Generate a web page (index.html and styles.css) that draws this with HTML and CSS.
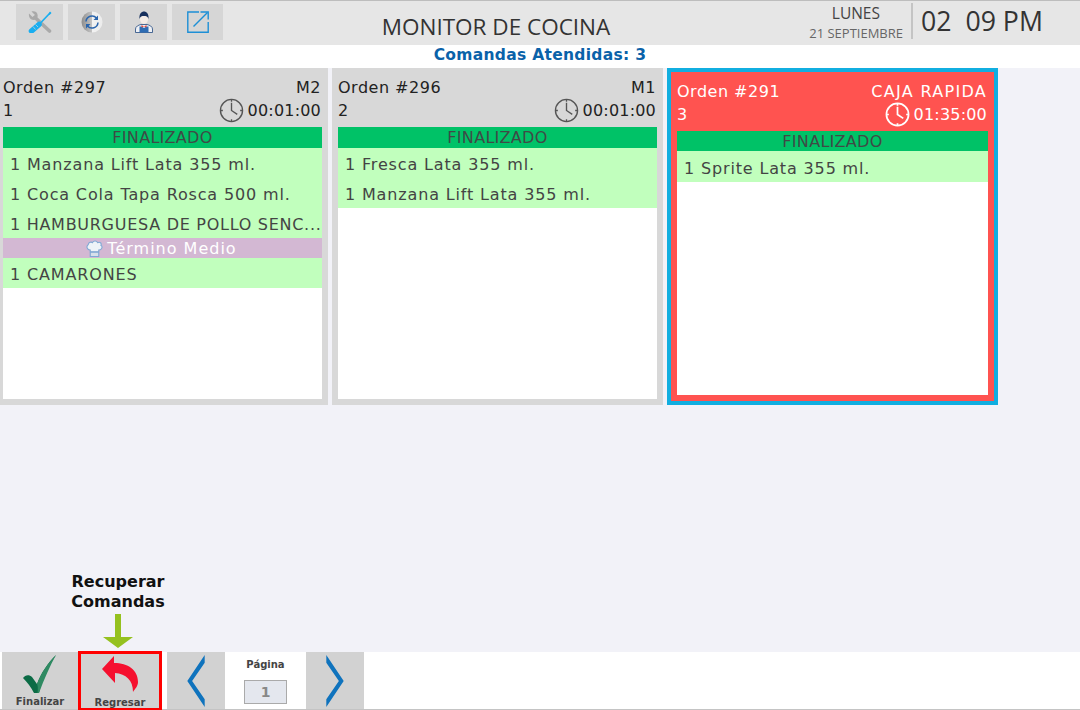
FILE: index.html
```html
<!DOCTYPE html>
<html lang="es">
<head>
<meta charset="utf-8">
<title>Monitor de Cocina</title>
<link rel="stylesheet" href="styles.css">
</head>
<body>
<div class="app">
  <header class="topbar">
    <div class="tools">
      <button class="tool"><svg width="24" height="22" viewBox="0 0 24 22" fill="none"><path d="M7 6.500 21.500 20" stroke="#a9a9a9" stroke-width="3.600" stroke-linecap="round"/><path d="M1 2.500 4.500 6 7 4 3.500 .5C7 -.5 10.500 1.500 9.500 6 8.500 8.500 6 9.500 3.500 8.500 1.500 7.500 .5 5 1 2.500Z" fill="#a9a9a9"/><path d="M22.500 1.500 12 12.500" stroke="#19aef0" stroke-width="1.700"/><path d="M22 .5 23.500 2 21.500 4 20.500 3Z" fill="#19aef0"/><path d="M11 13.500 3.500 20" stroke="#19aef0" stroke-width="5.500" stroke-linecap="round"/><path d="M5 15.500 7.500 18.500M7.500 13.500 10 16" stroke="#d6d6d6" stroke-width=".7"/></svg></button>
      <button class="tool"><svg width="22" height="22" viewBox="0 0 22 22"><defs><linearGradient id="refreshGrad" x1="0" x2="1" y1="0" y2="0"><stop offset="0" stop-color="#8e8e8e"/><stop offset=".5" stop-color="#c4c4c4"/><stop offset=".5" stop-color="#f2f2f2"/><stop offset="1" stop-color="#ececec"/></linearGradient></defs><circle cx="11" cy="11" r="10.500" fill="url(#refreshGrad)"/><path d="M5 10.500A6 6 0 0 1 15.500 7M17 11.500A6 6 0 0 1 6.500 15" fill="none" stroke="#2a65ad" stroke-width="1.500"/><path d="M17 4.500V9H12.500ZM5 17.500V13H9.500Z" fill="#2a65ad"/></svg></button>
      <button class="tool"><svg width="18" height="22" viewBox="0 0 18 22"><path d="M.5 21.500V18C.5 15.500 3.500 14 6 13.500H12C14.500 14 17.500 15.500 17.500 18V21.500Z" fill="#eef0f4" stroke="#22497f" stroke-width=".8"/><path d="M4.500 21.500V15.500H6.500L9 17 11.500 15.500H13.500V21.500Z" fill="#2e6cb3"/><path d="M6.500 14 9 15.500 11.500 14V16.500L9 15.500 6.500 16.500Z" fill="#e5483a"/><ellipse cx="9" cy="8" rx="4" ry="5" fill="#f4ece6"/><path d="M4.500 8C4 2.500 6.500 .5 9 .5S14 2.500 13.500 8C13 5.500 11 5 9 5S5 5.500 4.500 8Z" fill="#17305c"/></svg></button>
      <button class="tool tool-wide"><svg width="22" height="22" viewBox="0 0 22 22" fill="none" stroke="#1d8fd6" stroke-width="1.400"><path d="M12 1H.8V21.200H21.200V11"/><path d="M6.500 15.500 20.500 1.500"/><path d="M13.500 1H21.200V8.500"/></svg></button>
    </div>
    <h1 class="title">MONITOR DE COCINA</h1>
    <div class="date"><div class="day">LUNES</div><div class="fulldate">21 SEPTIEMBRE</div></div>
    <div class="clock">02&nbsp; 09 PM</div>
  </header>
  <div class="attended">Comandas Atendidas: 3</div>
  <main class="board">
    <section class="card">
      <div class="card-head">
        <div class="line"><span>Orden #297</span><span>M2</span></div>
        <div class="line"><span>1</span><span class="timer"><svg class="clock-ico" viewBox="0 0 26 26" fill="none" stroke="currentColor" stroke-width="1.400"><circle cx="13" cy="13" r="11.500"/><path d="M13 5V13L19 17M13 1.500V4M13 22V24.500M1.500 13H4M22 13H24.500" /></svg>00:01:00</span></div>
      </div>
      <div class="status">FINALIZADO</div>
      <div class="item">1 Manzana Lift Lata 355 ml.</div>
      <div class="item">1 Coca Cola Tapa Rosca 500 ml.</div>
      <div class="item item-caps">1 HAMBURGUESA DE POLLO SENC...</div>
      <div class="note"><svg class="chef" viewBox="0 0 16 16"><path d="M4 9.500C1 9.500 0 6 2 4.500 2.500 2 5 1.500 6 2.500 7 .5 10 .5 11 2.500 13 1.500 15 3 14 5 16 6 15 9.500 12 9.500V11H4Z" fill="#eef3f8" stroke="#7fa8d4" stroke-width="1"/><path d="M4 11.500H12V15.500H4Z" fill="#d7e0ea" stroke="#7fa8d4" stroke-width="1"/></svg>Término Medio</div>
      <div class="item">1 CAMARONES</div>
    </section>
    <section class="card">
      <div class="card-head">
        <div class="line"><span>Orden #296</span><span>M1</span></div>
        <div class="line"><span>2</span><span class="timer"><svg class="clock-ico" viewBox="0 0 26 26" fill="none" stroke="currentColor" stroke-width="1.400"><circle cx="13" cy="13" r="11.500"/><path d="M13 5V13L19 17M13 1.500V4M13 22V24.500M1.500 13H4M22 13H24.500" /></svg>00:01:00</span></div>
      </div>
      <div class="status">FINALIZADO</div>
      <div class="item">1 Fresca Lata 355 ml.</div>
      <div class="item">1 Manzana Lift Lata 355 ml.</div>
    </section>
    <section class="card card-alert">
      <div class="card-head">
        <div class="line"><span>Orden #291</span><span class="wide">CAJA RAPIDA</span></div>
        <div class="line"><span>3</span><span class="timer"><svg class="clock-ico" viewBox="0 0 26 26" fill="none" stroke="currentColor" stroke-width="1.800"><circle cx="13" cy="13" r="11.500"/><path d="M13 5V13L19 17M13 1.500V4M13 22V24.500M1.500 13H4M22 13H24.500" /></svg>01:35:00</span></div>
      </div>
      <div class="status">FINALIZADO</div>
      <div class="item">1 Sprite Lata 355 ml.</div>
    </section>
    <div class="callout">
      <div class="callout-text">Recuperar<br>Comandas</div>
      <svg class="callout-arrow" width="32" height="35" viewBox="0 0 32 35"><path d="M13 0H19V23H31L16 34 1 23H13Z" fill="#95c11f"/></svg>
    </div>
  </main>
  <footer class="bottombar">
    <button class="action"><svg width="34" height="38" viewBox="0 0 34 38"><path d="M0 23C2 20 6 19 9 22L14 29C18 18 25 8 33 0 26 10 19 24 16 38H11C8 32 4 27 0 23Z" fill="#0b6b45"/><path d="M14 29C18 18 25 8 33 0 27 11 21 24 16 38H14.500C15 34 15 31 14 29Z" fill="#2f8a62"/></svg><span class="label">Finalizar</span></button>
    <button class="action action-active"><svg width="40" height="38" viewBox="-2 0 40 38"><path d="M0 13 12 0V7C26 7 36 14 36 26 36 30 33 33 31 36 31 24 24 18 13 17V27Z" fill="#f5102f"/></svg><span class="label">Regresar</span></button>
    <button class="nav"><svg width="22" height="56" viewBox="0 0 22 58"><path d="M20 2V10L7 29 20 48V56L2 29Z" fill="#0f73bd"/></svg></button>
    <div class="pager"><div class="pager-label">Página</div><div class="pager-box">1</div></div>
    <button class="nav"><svg width="22" height="56" viewBox="0 0 22 58"><path d="M2 2V10L15 29 2 48V56L20 29Z" fill="#0f73bd"/></svg></button>
  </footer>
</div>
</body>
</html>
```
FILE: styles.css
```css
* { box-sizing: border-box; }
html, body { margin: 0; padding: 0; }
body { width: 1080px; height: 710px; overflow: hidden; font-family: "DejaVu Sans", sans-serif; }
button { border: 0; padding: 0; font: inherit; }
.app { display: flex; flex-direction: column; width: 1080px; height: 710px; background: #f2f2f8; overflow: hidden; }

.topbar { display: flex; align-items: center; height: 45px; flex: none; background: #e6e6e6; border-top: 1px solid #bdbdbd; padding-left: 16px; }
.tools { display: flex; gap: 5px; width: 330px; align-self: flex-start; margin-top: 3px; }
.tool { display: flex; align-items: center; justify-content: center; width: 47px; height: 36px; background: #d6d6d6; }
.tool-wide { width: 51px; }
.title { width: 300px; margin: 8px 0 0; font: 400 22.500px/1 "Open Sans", sans-serif; color: #333; text-align: center; white-space: nowrap; }
.date { width: 265px; align-self: flex-start; padding: 3px 8px 0 0; text-align: right; font-family: "Open Sans", sans-serif; color: #444; }
.day { font-size: 15.500px; line-height: 18px; padding-right: 23px; }
.fulldate { font-size: 13px; line-height: 18px; color: #666; margin-top: 2px; }
.clock { height: 36px; border-left: 2px solid #c4c4c4; padding-left: 8px; margin-top: -4px; font: 400 26.700px/35px "Open Sans", sans-serif; color: #333; white-space: nowrap; }

.attended { height: 23px; flex: none; background: #fff; text-align: center; color: #0a62a9; font: 700 15.500px/21px "DejaVu Sans", sans-serif; letter-spacing: .3px; }

.board { position: relative; flex: 1; display: flex; align-items: flex-start; gap: 4px; margin-left: -3px; }
.card { display: flex; flex-direction: column; width: 331px; height: 337px; background: #fff; border: solid #d8d8d8; border-width: 0 6px 6px; color: #444; font-size: 16px; }
.card-head { background: #d8d8d8; color: #222; height: 59px; padding: 7px 1px 0 0; }
.line { display: flex; justify-content: space-between; align-items: center; height: 24px; letter-spacing: .5px; }
.line + .line { height: 22px; margin-top: 0; letter-spacing: .2px; }
.timer { display: flex; align-items: center; gap: 4px; }
.clock-ico { width: 25px; height: 25px; color: #555; }
.status { height: 21px; background: #00c267; text-align: center; line-height: 21px; color: #3f4a46; letter-spacing: .3px; }
.item { height: 30px; line-height: 30px; padding: 2px 0 0 7px; background: #c1ffbd; white-space: nowrap; letter-spacing: .85px; }
.item-caps { letter-spacing: .72px; }
.note { display: flex; align-items: center; justify-content: center; height: 20px; background: #d3b8d3; color: #fff; letter-spacing: 1px; }
.chef { width: 17px; height: 17px; margin-right: 4px; margin-left: -2px; }

.card-alert { border: 4px solid #11aee0; background: #ff5350; padding: 0 6px 6px; }
.card-alert .card-head { background: #ff5350; color: #fff; height: 59px; padding: 7px 1px 0 0; }
.card-alert .clock-ico { color: #fff; }
.card-alert .status { height: 20px; line-height: 22px; }
.card-alert .item { height: 31px; line-height: 31px; }
.card-alert .status, .card-alert .item, .card-alert .card-head { flex: none; }
.card-alert::after { content: ""; flex: 1; background: #fff; }
.wide { letter-spacing: 1.300px; }

.callout { position: absolute; left: 74px; top: 504px; width: 94px; display: flex; flex-direction: column; align-items: center; }
.callout-text { font: 700 16px/20px "DejaVu Sans", sans-serif; color: #111; text-align: center; white-space: nowrap; }
.callout-arrow { margin-top: 2px; }

.bottombar { display: flex; flex: none; height: 58px; background: #fff; padding-left: 2px; border-bottom: 1px solid #c4c4c4; }
.action { display: flex; flex-direction: column; align-items: center; justify-content: flex-end; width: 76px; background: #d2d2d2; color: #444; font: 700 10px/13px "DejaVu Sans", sans-serif; padding-bottom: 1px; }
.action svg { margin-bottom: 2px; }
.action-active { width: 84px; border: 3px solid #f00; border-bottom-width: 2px; padding-bottom: 0; margin-top: -1px; height: 59px; }
.action-active .label { margin-bottom: -1px; }
.nav { display: flex; align-items: center; justify-content: center; width: 58px; background: #d2d2d2; margin-left: 5px; }
.pager { width: 81px; display: flex; flex-direction: column; align-items: center; background: #fff; font-weight: 700; color: #444; }
.pager + .nav { margin-left: 0; }
.pager-label { font-size: 10px; line-height: 13px; margin-top: 6px; }
.pager-box { width: 43px; height: 24px; margin-top: 9px; background: #e4e7ee; border: 1px solid #aaa; text-align: center; font-size: 14px; line-height: 22px; color: #888; }
```
